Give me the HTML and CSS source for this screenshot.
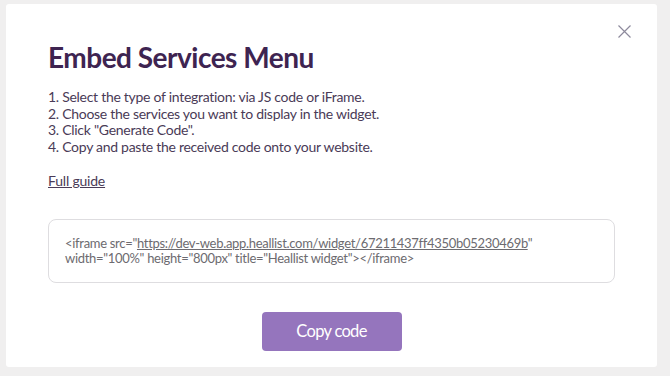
FILE: index.html
```html
<!DOCTYPE html>
<html lang="en">
<head>
    <meta charset="UTF-8">
    <meta name="viewport" content="width=device-width, initial-scale=1.0">
    <title>Embed Services Menu</title>
    <link rel="stylesheet" href="styles.css">
</head>
<body>

<div class="modal">
    <button class="fechar" aria-label="Close">
        <svg width="13" height="13" viewBox="0 0 13 13">
            <path d="M0.5 0.5 L12.5 12.5 M12.5 0.5 L0.5 12.5" stroke="#8d8a9c" stroke-width="1.2" fill="none"/>
        </svg>
    </button>

    <h1 class="titulo">Embed Services Menu</h1>

    <div class="passos">
        <p>1. Select the type of integration: via JS code or iFrame.</p>
        <p>2. Choose the services you want to display in the widget.</p>
        <p>3. Click "Generate Code".</p>
        <p>4. Copy and paste the received code onto your website.</p>
    </div>

    <a class="guia" href="#">Full guide</a>

    <div class="codigo">
        &lt;iframe src="<a href="#">https://dev-web.app.heallist.com/widget/67211437ff4350b05230469b</a>"<br>
        width="100%" height="800px" title="Heallist widget"&gt;&lt;/iframe&gt;
    </div>

    <div class="acoes">
        <button class="botao-copiar">Copy code</button>
    </div>
</div>

</body>
</html>
```

FILE: styles.css
```css
body {
    margin: 0;
    padding: 4px 13px 0 6px;
    background-color: #f0efef;
    font-family: 'Lato', 'Open Sans', sans-serif;
    color: #4a3b57;
}
.modal {
    position: relative;
    height: 363px;
    box-sizing: border-box;
    background-color: #fff;
    border-radius: 3px;
    padding: 36px 42px 0 42px;
}
.fechar {
    position: absolute;
    top: 21px;
    right: 26px;
    padding: 0;
    border: none;
    background: none;
    cursor: pointer;
}
.titulo {
    margin: 0;
    font-size: 28px;
    line-height: 34px;
    font-weight: 700;
    letter-spacing: -0.5px;
    color: #3e2451;
}
.passos {
    margin-top: 15px;
}
.passos p {
    margin: 0;
    font-size: 14px;
    line-height: 16.7px;
    letter-spacing: -0.28px;
}
.guia {
    display: inline-block;
    margin-top: 17px;
    font-size: 14px;
    line-height: 16.8px;
    letter-spacing: -0.2px;
    color: #4a3b57;
}
.codigo {
    margin-top: 29px;
    border: 1px solid #dedde0;
    border-radius: 8px;
    padding: 16px;
    font-size: 13px;
    line-height: 15px;
    letter-spacing: -0.3px;
    color: #6d6b70;
}
.codigo a {
    color: #6d6b70;
}
.acoes {
    display: flex;
    justify-content: center;
    margin-top: 29px;
}
.botao-copiar {
    width: 140px;
    height: 39px;
    border: none;
    border-radius: 4px;
    background-color: #9575bd;
    color: #fff;
    font-family: inherit;
    font-size: 16.5px;
    letter-spacing: -0.7px;
    cursor: pointer;
}
```
